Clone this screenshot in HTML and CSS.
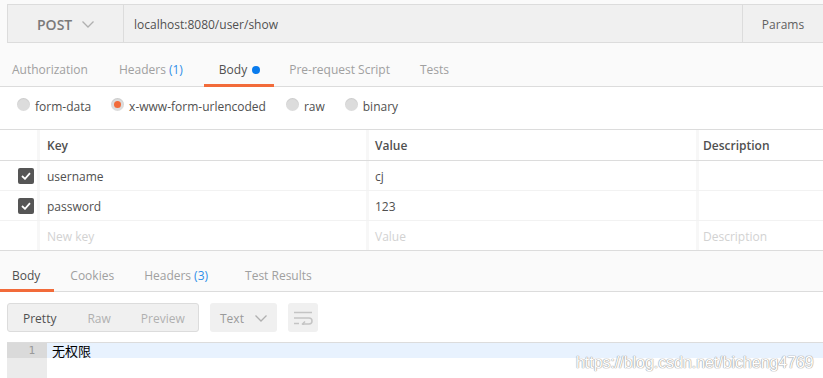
FILE: index.html
```html
<!DOCTYPE html>
<html>
<head>
<meta charset="utf-8">
<link rel="stylesheet" href="styles.css">
</head>
<body>
<div class="request">
  <div class="url-bar">
    <div class="method">
      <span class="method-name">POST</span>
      <svg class="chev" width="12" height="7" viewBox="0 0 12 7"><path d="M0.5 0.5 L6 6 L11.5 0.5" fill="none" stroke="#b0b0b0" stroke-width="1.3"/></svg>
    </div>
    <div class="url">localhost:8080/user/show</div>
    <div class="params">Params</div>
  </div>
  <div class="tabs req-tabs">
    <div class="tab t-auth">Authorization</div>
    <div class="tab t-head">Headers <span class="count">(1)</span></div>
    <div class="tab t-body active">Body <span class="dot"></span></div>
    <div class="tab t-pre">Pre-request Script</div>
    <div class="tab t-tests">Tests</div>
  </div>
</div>
<div class="body-modes">
  <label class="mode"><span class="radio"></span>form-data</label>
  <label class="mode"><span class="radio checked"></span>x-www-form-urlencoded</label>
  <label class="mode"><span class="radio"></span>raw</label>
  <label class="mode"><span class="radio"></span>binary</label>
</div>
<div class="kv-table">
  <div class="row head">
    <div class="cell c-check"></div>
    <div class="cell c-key">Key</div>
    <div class="cell c-val">Value</div>
    <div class="cell c-desc">Description</div>
  </div>
  <div class="row">
    <div class="cell c-check"><span class="checkbox"><svg width="10" height="8" viewBox="0 0 10 8"><path d="M1 4 L4 6.8 L9 1.2" fill="none" stroke="#fff" stroke-width="1.8"/></svg></span></div>
    <div class="cell c-key">username</div>
    <div class="cell c-val">cj</div>
    <div class="cell c-desc"></div>
  </div>
  <div class="row">
    <div class="cell c-check"><span class="checkbox"><svg width="10" height="8" viewBox="0 0 10 8"><path d="M1 4 L4 6.8 L9 1.2" fill="none" stroke="#fff" stroke-width="1.8"/></svg></span></div>
    <div class="cell c-key">password</div>
    <div class="cell c-val">123</div>
    <div class="cell c-desc"></div>
  </div>
  <div class="row placeholder">
    <div class="cell c-check"></div>
    <div class="cell c-key">New key</div>
    <div class="cell c-val">Value</div>
    <div class="cell c-desc">Description</div>
  </div>
</div>
<div class="tabs resp-tabs">
  <div class="tab active r-body">Body</div>
  <div class="tab r-cookies">Cookies</div>
  <div class="tab r-head">Headers <span class="count">(3)</span></div>
  <div class="tab r-tests">Test Results</div>
</div>
<div class="toolbar">
  <div class="view-group">
    <span class="view active">Pretty</span>
    <span class="view">Raw</span>
    <span class="view">Preview</span>
  </div>
  <div class="format">
    <span>Text</span>
    <svg width="12" height="7" viewBox="0 0 12 7"><path d="M0.5 0.5 L6 6 L11.5 0.5" fill="none" stroke="#b0b0b0" stroke-width="1.3"/></svg>
  </div>
  <div class="wrap-btn">
    <svg width="20" height="14" viewBox="0 0 20 14"><path d="M1 1.5 H19 M1 7 H16 a3 3 0 0 1 0 6 H10 M1 12.5 H6" fill="none" stroke="#c4c4c4" stroke-width="1.5"/><path d="M12 10.5 L9.5 13 L12 15.5" fill="none" stroke="#c4c4c4" stroke-width="1.5"/></svg>
  </div>
</div>
<div class="editor">
  <div class="gutter"><div class="ln active-ln">1</div></div>
  <div class="code"><div class="line active-line">无权限</div></div>
  <div class="watermark">https://blog.csdn.net/bicheng4769</div>
</div>
</body>
</html>
```
FILE: styles.css
```css
* { box-sizing: border-box; }
html, body { margin: 0; padding: 0; }
body {
  width: 823px;
  height: 378px;
  overflow: hidden;
  background: #fff;
  font-family: "Open Sans", "Noto Sans", sans-serif;
  font-size: 12px;
  color: #505050;
  position: relative;
}
.request { background: #fafafa; padding-top: 4px; }
.url-bar {
  margin-left: 7px;
  height: 39px;
  display: flex;
  background: #f0f0f0;
  border: 1px solid #dcdcdc;
  border-right: none;
}
.method {
  width: 116px;
  border-right: 1px solid #dcdcdc;
  display: flex;
  align-items: center;
  padding-left: 29px;
  padding-top: 1px;
  gap: 10px;
}
.method-name { font-size: 14px; font-weight: 600; color: #7a7a7a; }
.url { flex: 1; display: flex; align-items: center; padding-left: 10px; padding-top: 1px; font-size: 12px; color: #505050; }
.params {
  width: 81px;
  border-left: 1px solid #dcdcdc;
  display: flex; align-items: center; justify-content: center;
  padding-top: 1px;
  color: #606060;
}
.tabs {
  display: flex;
  background: #fafafa;
  border-bottom: 1px solid #dcdcdc;
}
.req-tabs { height: 44px; }
.tab {
  display: flex; align-items: center;
  padding: 0 15px;
  color: #a0a0a0;
  border-bottom: 3px solid transparent;
  margin-bottom: -1px;
  white-space: nowrap;
}
.req-tabs .tab { padding-top: 12px; }
.tab.active { color: #505050; border-bottom-color: #f26b3a; }
.count { color: #2f8ee8; margin-left: 3px; }
.dot { width: 8px; height: 8px; border-radius: 50%; background: #097bed; display: inline-block; margin-left: 5px; }
.t-auth { margin-left: -3px; }
.t-head { margin-left: 1px; padding-right: 21px !important; }
.t-body { padding-right: 14px !important; }
.body-modes {
  height: 42px;
  display: flex;
  align-items: center;
  padding-left: 17px;
  padding-bottom: 4px;
  gap: 20px;
}
.mode { display: flex; align-items: center; gap: 5px; color: #505050; }
.radio {
  width: 13px; height: 13px; border-radius: 50%;
  background: #dcdcdc;
  box-shadow: inset 0 1px 1px rgba(0,0,0,0.08);
  display: inline-flex; align-items: center; justify-content: center;
  margin-top: -3px;
}
.radio.checked::after {
  content: ""; width: 7px; height: 7px; border-radius: 50%; background: #f26b3a;
}
.kv-table { border-top: 1px solid #dcdcdc; border-bottom: 1px solid #dcdcdc; }
.row { display: flex; height: 30px; border-top: 1px solid #f2f2f2; }
.row:nth-child(2) { border-top: 1px solid #dcdcdc; }
.row.head { border-top: none; height: 30px; }
.row:not(.head) .cell { padding-top: 2px; }
.cell { display: flex; align-items: center; padding-left: 7px; }
.c-check { width: 40px; border-right: 3px solid #f7f7f7; padding-left: 18px; }
.row:not(.head) .c-check { padding-top: 0; }
.c-key { width: 329px; border-right: 3px solid #f7f7f7; }
.c-val { width: 330px; border-right: 3px solid #f7f7f7; padding-left: 6px; }
.c-desc { flex: 1; padding-left: 4px; }
.head .cell { font-weight: 600; color: #505050; }
.placeholder .cell { color: #d2d2d2; }
.checkbox {
  width: 16px; height: 16px; border-radius: 2px; background: #555;
  display: inline-flex; align-items: center; justify-content: center;
}
.resp-tabs { height: 41px; }
.resp-tabs .tab { padding: 10px 15px 0 16px; }
.resp-tabs .r-body { padding: 10px 14px 0 12px; }
.resp-tabs .r-head { padding: 10px 21px 0 15px; }
.toolbar {
  height: 50px;
  display: flex;
  align-items: center;
  padding-left: 7px;
  gap: 11px;
  padding-top: 1px;
}
.view-group {
  width: 192px; height: 29px;
  display: flex; align-items: center;
  background: #f0f0f0;
  border: 1px solid #dcdcdc;
  border-radius: 3px;
  padding-left: 15px;
  padding-top: 1px;
}
.view { color: #b0b0b0; margin-right: 31px; }
.view:nth-child(2) { margin-right: 30px; }
.view.active { color: #505050; }
.format {
  width: 67px; height: 29px;
  background: #f0f0f0; border-radius: 3px;
  display: flex; align-items: center; padding-left: 10px; gap: 11px;
  padding-top: 1px;
  color: #9a9a9a;
}
.wrap-btn {
  width: 30px; height: 29px; background: #f0f0f0; border-radius: 3px;
  display: flex; align-items: center; justify-content: center;
}
.editor {
  display: flex;
  border-top: 1px solid #dcdcdc;
  margin-left: 7px;
  height: 36px;
  position: relative;
}
.gutter { width: 40px; background: #ebebeb; }
.ln {
  height: 15px; line-height: 15px; text-align: right; padding-right: 12px;
  color: #999; font-family: "DejaVu Sans Mono", monospace; font-size: 11px;
}
.active-ln { background: #dadada; }
.code { flex: 1; }
.line {
  height: 15px; line-height: 15px;
  padding-left: 5px;
  font-family: "Noto Sans CJK SC", sans-serif; font-size: 13px; color: #000;
}
.active-line { background: #e8f2fe; }
.watermark {
  position: absolute;
  left: 569px; top: 11px;
  font-family: "Liberation Sans", Arial, sans-serif;
  font-size: 15.9px;
  color: #fff;
  text-shadow: 0 0 1px #999, 0 0 1px #999, 0 0 1px #bbb;
}
```
